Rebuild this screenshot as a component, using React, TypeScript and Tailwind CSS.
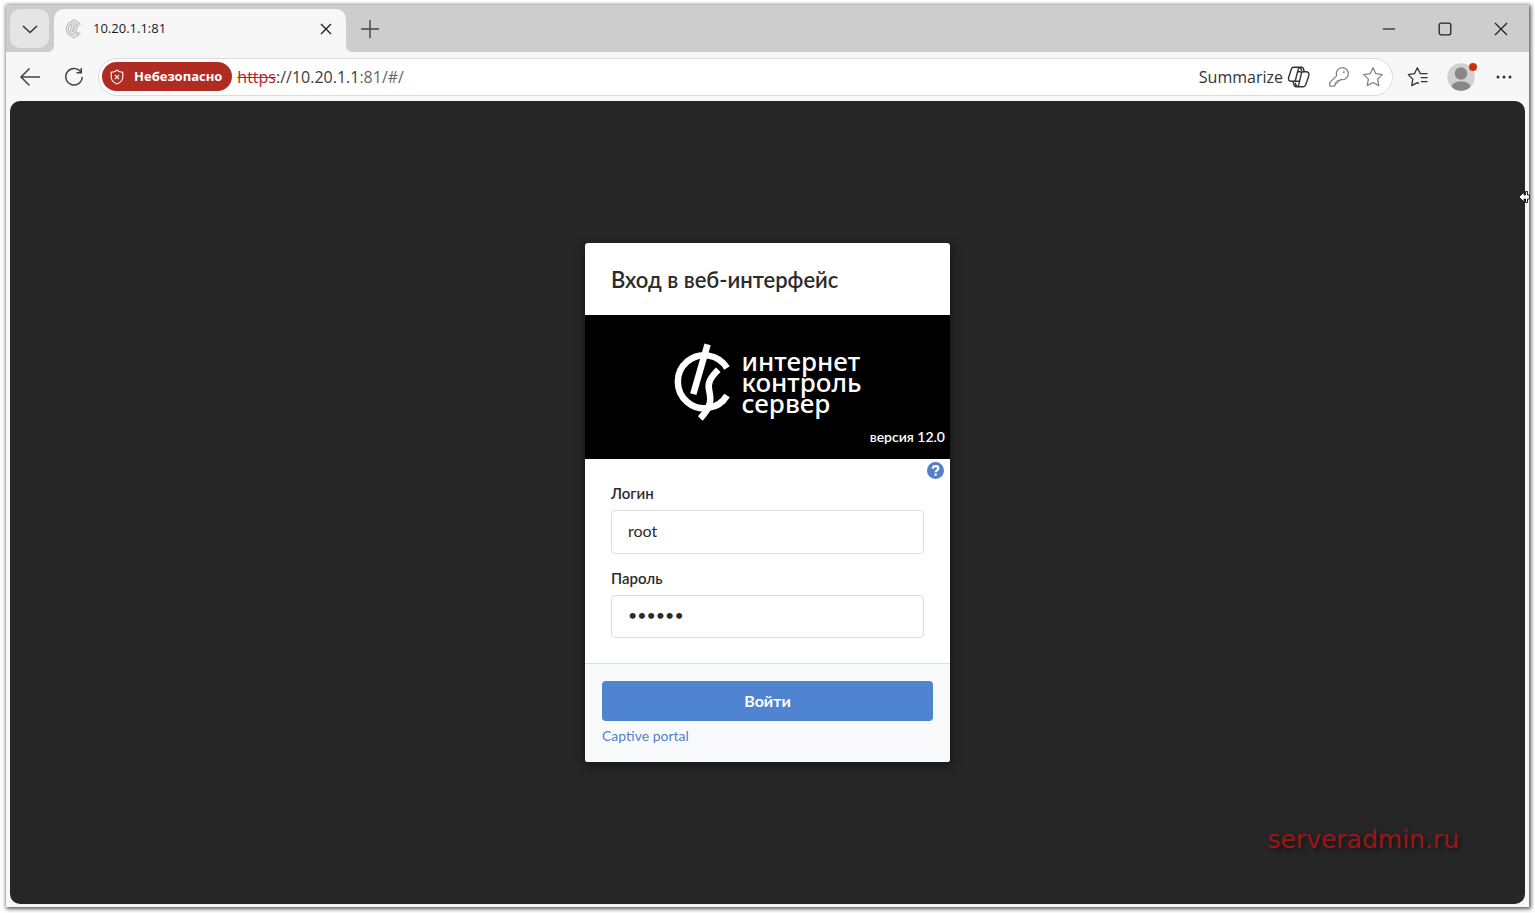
import { useState } from "react";
import type { ReactNode } from "react";

function LogoMark({ className }: { className: string }) {
  return (
    <svg viewBox="0 0 80 95" className={className} fill="none" stroke="currentColor" strokeWidth="6.500">
      <path d="M62 33A26.500 26.500 0 1 0 62 60.500" />
      <path d="M42.600 9.300 28.300 59.200" />
      <path d="M53.300 34.800C44 44 42.500 49 44.300 56C46 64 47 71 35.300 83.500" />
    </svg>
  );
}

function IconButton({ label, className = "", children }: { label: string; className?: string; children: ReactNode }) {
  return (
    <button type="button" aria-label={label} className={`flex shrink-0 items-center justify-center ${className}`}>
      {children}
    </button>
  );
}

function TabBar() {
  return (
    <div className="flex h-[47px] items-start bg-[#cdcdcd] pl-1 pt-1">
      <IconButton label="Tab search" className="size-[39px] rounded-[10px] bg-[#e5e5e5]">
        <svg viewBox="0 0 16 16" className="size-4" fill="none" stroke="#333" strokeWidth="1.500">
          <path d="m1 5 7 6.500L15 5" />
        </svg>
      </IconButton>

      <div className="relative ml-[5px] flex h-[43px] w-[292px] items-center rounded-t-[10px] bg-[#f7f7f7] pb-1 pl-2.5 pr-3">
        <svg viewBox="0 0 6 6" className="absolute -left-1.5 bottom-0 size-1.5" fill="#f7f7f7">
          <path d="M6 0v6H0a6 6 0 0 0 6-6" />
        </svg>
        <svg viewBox="0 0 6 6" className="absolute -right-1.5 bottom-0 size-1.5" fill="#f7f7f7">
          <path d="M0 0v6h6a6 6 0 0 1-6-6" />
        </svg>
        <svg viewBox="0 0 80 95" className="h-6 w-5" fill="none">
          <g stroke="#b8b8b8" strokeWidth="13">
            <path d="M62 33A26.500 26.500 0 1 0 62 60.500" />
            <path d="M42.600 9.300 28.300 59.200" />
            <path d="M53.300 34.800C44 44 42.500 49 44.300 56C46 64 47 71 35.300 83.500" />
          </g>
          <g stroke="#e9e9e9" strokeWidth="5">
            <path d="M62 33A26.500 26.500 0 1 0 62 60.500" />
            <path d="M42.600 9.300 28.300 59.200" />
            <path d="M53.300 34.800C44 44 42.500 49 44.300 56C46 64 47 71 35.300 83.500" />
          </g>
        </svg>
        <span className="ml-[9px] flex-1 text-[13px] text-[#1b1b1b]">10.20.1.1:81</span>
        <IconButton label="Close tab" className="size-4">
          <svg viewBox="0 0 12 12" className="size-3" fill="none" stroke="#222" strokeWidth="1.400">
            <path d="m1 1 10 10M11 1 1 11" />
          </svg>
        </IconButton>
      </div>

      <IconButton label="New tab" className="ml-3.5 mt-2.5 size-5">
        <svg viewBox="0 0 20 20" className="size-5" fill="none" stroke="#444" strokeWidth="1.400">
          <path d="M10 1v18M1 10h18" />
        </svg>
      </IconButton>

      <div className="ml-auto flex">
        <IconButton label="Minimize" className="h-[39px] w-14">
          <svg viewBox="0 0 14 14" className="size-3.5" fill="none" stroke="#222" strokeWidth="1.200">
            <path d="M1 7h12" />
          </svg>
        </IconButton>
        <IconButton label="Maximize" className="h-[39px] w-14">
          <svg viewBox="0 0 14 14" className="size-3.5" fill="none" stroke="#222" strokeWidth="1.300">
            <rect x="1.200" y="1.200" width="11.600" height="11.600" rx="2" />
          </svg>
        </IconButton>
        <IconButton label="Close" className="h-[39px] w-14">
          <svg viewBox="0 0 14 14" className="size-3.5" fill="none" stroke="#222" strokeWidth="1.300">
            <path d="m1 1 12 12M13 1 1 13" />
          </svg>
        </IconButton>
      </div>
    </div>
  );
}

function Toolbar() {
  return (
    <div className="flex h-[49px] items-center bg-[#f7f7f7] pl-3 pr-4">
      <IconButton label="Back" className="size-6">
        <svg viewBox="0 0 22 20" className="h-5 w-[22px]" fill="none" stroke="#444" strokeWidth="1.500">
          <path d="M21 10H2M10.500 1.500 2 10l8.500 8.500" />
        </svg>
      </IconButton>
      <IconButton label="Refresh" className="ml-5 size-6">
        <svg viewBox="0 0 20 20" className="size-5" fill="none" stroke="#444" strokeWidth="1.500">
          <path d="M17 5.500A8.200 8.200 0 1 0 18.200 10M17.300 1v4.800h-4.800" />
        </svg>
      </IconButton>

      <div className="ml-3 flex h-[38px] flex-1 items-center rounded-full border border-[#dcdcdc] bg-white pl-[3px] pr-2">
        <button type="button" className="flex h-[29px] items-center rounded-full bg-[#b02c22] pl-2 pr-2 text-white">
          <svg viewBox="0 0 14 16" className="h-4 w-3.5" fill="none" stroke="currentColor" strokeWidth="1.100">
            <path d="M7 1.200C5.200 2.600 3.200 3.200 1.200 3.300V8c0 3.300 2.200 5.600 5.800 6.900 3.600-1.300 5.800-3.600 5.800-6.900V3.300C10.800 3.200 8.800 2.600 7 1.200Z" />
            <path d="m4.900 5.900 4.200 4.200M9.100 5.900l-4.200 4.200" />
          </svg>
          <span className="ml-2.5 mr-0.5 text-[13px] font-bold">Небезопасно</span>
        </button>
        <div className="ml-[5px] flex-1 text-base text-[#3b3b3b]">
          <s className="text-[#b3261e]">https</s>://10.20.1.1<span className="text-[#666]">:81/#/</span>
        </div>
        <button type="button" className="flex items-center gap-1 text-base text-[#333]">
          Summarize
          <svg viewBox="0 0 24 22" className="h-[22px] w-6" fill="none" stroke="#333" strokeWidth="1.400" strokeLinejoin="round">
            <path d="M14.800 5.200 13.900 2.600C13.600 1.700 13 1.300 12 1.300H6.700C5.500 1.300 4.800 1.900 4.400 3L1.700 11.300C1 13.600 1.800 15.200 4 15.200H6.600C7.700 15.200 8.300 14.600 8.600 13.500L11.200 3.400C11.500 2 12.200 1.300 13.300 1.300H14.500C15.600 1.300 16.200 1.900 16.500 3L17.200 5.700" />
            <path d="M8.200 16.800 9.100 19.400C9.400 20.300 10 20.700 11 20.700H16.300C17.500 20.700 18.200 20.100 18.600 19L21.700 9.900C22.400 7.600 21.600 5.700 19.400 5.700H16.400C15.300 5.700 14.700 6.300 14.400 7.400L11.800 18.600C11.500 20 10.800 20.700 9.700 20.700H9.100C8 20.700 7.400 20.100 7.100 19L5.900 15.200M14.400 7.400C14.700 6.200 13.900 5.700 12.800 5.700H10.600M12.500 15.200H8" />
          </svg>
        </button>
        <IconButton label="Passwords" className="ml-[17px] size-[22px]">
          <svg viewBox="0 0 22 22" className="size-[22px]" fill="none" stroke="#858585" strokeWidth="1.300" strokeLinejoin="round">
            <path d="M14.300 1.700a6 6 0 1 1-1.500 11.800l-1.500 1.500H9.200v2H7.300v2l-1.200 1.200H2.500c-.5 0-.8-.3-.8-.8v-2.800l7-7a6 6 0 0 1 5.600-7.900Z" />
            <circle cx="15.800" cy="6.200" r="1" fill="#858585" stroke="none" />
          </svg>
        </IconButton>
        <IconButton label="Add to favorites" className="ml-3 size-[22px]">
          <svg viewBox="0 0 22 22" className="size-[22px]" fill="none" stroke="#858585" strokeWidth="1.300" strokeLinejoin="round">
            <path d="m11 1.800 2.800 5.900 6.500.9-4.700 4.500 1.200 6.500-5.800-3.100-5.800 3.100 1.200-6.500-4.700-4.500 6.500-.9Z" />
          </svg>
        </IconButton>
      </div>

      <IconButton label="Favorites" className="ml-3.5 size-[22px]">
        <svg viewBox="0 0 22 22" className="size-[22px]" fill="none" stroke="#333" strokeWidth="1.300" strokeLinejoin="round">
          <path d="M20.500 7.700h-7.200L10.300 1.800 7.500 7.700l-6.200.9 4.500 4.500-1.100 6.500 5.600-3 1.700 1M13.800 11.700h6.700M13.800 15.700h6.700" />
        </svg>
      </IconButton>
      <IconButton label="Profile" className="relative ml-[18px] size-7">
        <svg viewBox="0 0 28 28" className="size-7">
          <clipPath id="avatar">
            <circle cx="14" cy="14" r="13.700" />
          </clipPath>
          <g clipPath="url(#avatar)">
            <rect width="28" height="28" fill="#d2d0ce" />
            <circle cx="14" cy="10.500" r="6.200" fill="#8a8886" />
            <ellipse cx="14" cy="24" rx="9.500" ry="5.700" fill="#8a8886" />
          </g>
        </svg>
        <span className="absolute -right-0.5 top-0 size-2 rounded-full bg-[#d0310d]" />
      </IconButton>
      <IconButton label="Settings and more" className="ml-5 size-[18px]">
        <svg viewBox="0 0 18 18" className="size-[18px]" fill="#333">
          <circle cx="3" cy="9" r="1.500" />
          <circle cx="9" cy="9" r="1.500" />
          <circle cx="15" cy="9" r="1.500" />
        </svg>
      </IconButton>
    </div>
  );
}

function LoginCard() {
  const [login, setLogin] = useState("root");
  const [password, setPassword] = useState("secret");

  return (
    <form
      className="w-[365px] overflow-hidden rounded-[3px] bg-white font-['Lato',sans-serif] text-[#2b2b2b] shadow-[1px_3px_10px_2px_rgba(0,0,0,0.35)]"
      onSubmit={(e) => e.preventDefault()}
    >
      <h1 className="flex h-[72px] items-center px-[26px] text-[22px] font-semibold">
        Вход в веб-интерфейс
      </h1>

      <div className="relative flex h-36 justify-center bg-black pt-5 text-white">
        <LogoMark className="h-[95px] w-20 shrink-0" />
        <p className="pr-2 pt-4 font-['Noto_Sans',sans-serif] text-[26px] font-medium leading-[21px] -ml-1">
          интернет
          <br />
          контроль
          <br />
          сервер
        </p>
        <span className="absolute bottom-3 right-[5px] text-[14px] font-semibold leading-5">версия 12.0</span>
      </div>

      <div className="relative px-[26px] pb-[25px] pt-6">
        <button
          type="button"
          aria-label="Help"
          className="absolute right-1.5 top-[3px] flex size-[17px] items-center justify-center rounded-full bg-[#5380c6] text-white"
        >
          <svg viewBox="0 0 17 17" className="size-[17px]" fill="none" stroke="currentColor" strokeWidth="2.200">
            <path d="M5.700 6.600C5.900 4.900 7 4.200 8.500 4.200c1.600 0 2.800.8 2.800 2.200 0 1.900-2.700 1.900-2.700 3.900" />
            <path d="M8.600 11.500v2.200" />
          </svg>
        </button>
        <label htmlFor="login" className="block text-[15px] font-semibold leading-5">
          Логин
        </label>
        <input
          id="login"
          value={login}
          onChange={(e) => setLogin(e.target.value)}
          className="mt-[7px] block h-11 w-full rounded-[4px] border border-[#dededf] px-4 pb-1 text-base"
        />
        <label htmlFor="password" className="mt-[14px] block text-[15px] font-semibold leading-5">
          Пароль
        </label>
        <input
          id="password"
          type="password"
          value={password}
          onChange={(e) => setPassword(e.target.value)}
          className="mt-[7px] block h-[43px] w-full rounded-[4px] border border-[#dededf] px-4 pb-1 text-base"
        />
      </div>

      <div className="border-t border-[#dcddde] bg-[#f9fafc] px-[17px] pb-4 pt-[17px]">
        <button type="submit" className="h-10 w-full rounded-[4px] bg-[#4f84d0] text-base font-bold text-white">
          Войти
        </button>
        <a href="#portal" className="mt-[5px] block text-[14px] leading-5 text-[#5380c6]">
          Captive portal
        </a>
      </div>
    </form>
  );
}

export default function App() {
  return (
    <div className="flex min-h-screen bg-white px-1.5 pb-1.5 pt-[5px] font-['Open_Sans',sans-serif]">
      <div className="flex flex-1 flex-col bg-[#f7f7f7] shadow-[1px_1px_4px_1px_rgba(0,0,0,0.65)]">
        <TabBar />
        <Toolbar />
        <main className="relative mx-1 mb-[3px] flex flex-1 items-center justify-center rounded-[10px] bg-[#262626]">
          <LoginCard />
          <span className="absolute bottom-[46px] right-[66px] font-['DejaVu_Sans',sans-serif] text-[25px] leading-9 text-[#9b1518] [text-shadow:3px_3px_4px_rgba(0,0,0,0.5)]">
            serveradmin.ru
          </span>
          <svg viewBox="0 0 12 14" className="absolute -right-[5px] top-[89px] h-3.5 w-3" fill="#fff" stroke="#222" strokeWidth="1">
            <path d="M1 7 6 2v3h1.500V1.500h2V5H11.500v4H9.500v3.500h-2V9H6v3Z" />
          </svg>
        </main>
      </div>
    </div>
  );
}
